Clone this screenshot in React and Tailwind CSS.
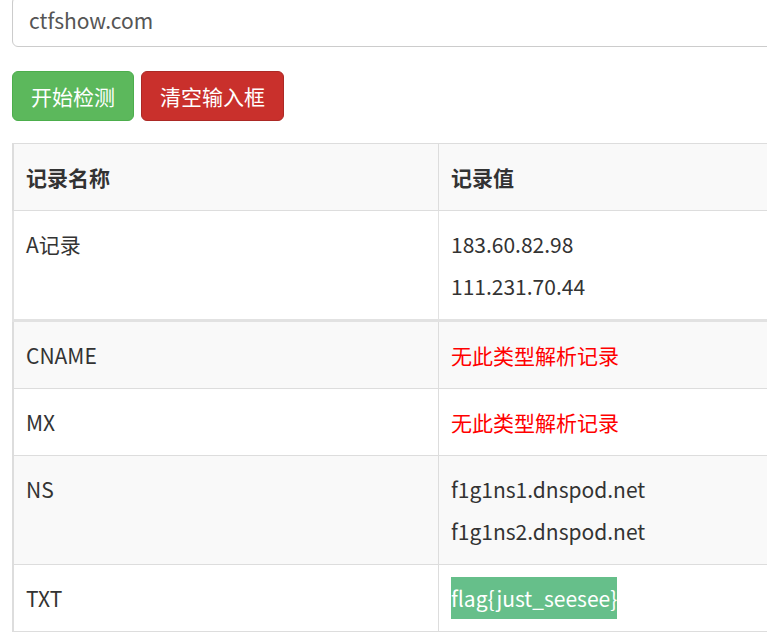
import React from "react";

const records = [
  { name: "A记录", values: ["183.60.82.98", "111.231.70.44"], thick: true },
  { name: "CNAME", missing: true },
  { name: "MX", missing: true },
  { name: "NS", values: ["f1g1ns1.dnspod.net", "f1g1ns2.dnspod.net"] },
  { name: "TXT", flag: "flag{just_seesee}" },
];

const font = { fontFamily: '"Noto Sans CJK SC", "Noto Sans", sans-serif' };

const App = () => {
  return (
    <div className="w-[767px] h-[635px] overflow-hidden bg-white text-[#333] text-[21px]" style={font}>
      <div className="w-[1000px] pl-3">
        <input
          type="text"
          defaultValue="ctfshow.com"
          className="block w-full h-[51px] -mt-[4px] pl-4 pr-4 pb-[3px] border border-[#ccc] rounded-[6px] text-[#555] text-[21px] shadow-[inset_0_1px_1px_rgba(0,0,0,0.075)] outline-none"
        />

        <div className="flex gap-[7px] mt-6">
          <button className="h-[50px] px-[18px] leading-[30px] rounded-[6px] bg-[#5cb85c] border border-[#4cae4c] text-white">
            开始检测
          </button>
          <button className="h-[50px] px-[18px] leading-[30px] rounded-[6px] bg-[#c9302c] border border-[#ac2925] text-white">
            清空输入框
          </button>
        </div>

        <table className="mt-[22px] w-full border-separate border-spacing-0 border-t border-[#ddd]">
          <thead>
            <tr className="bg-[#f9f9f9]">
              <th className="w-[427px] text-left font-bold px-3 py-[18px] leading-[30px] border-l-2 border-r border-b border-[#ddd]">
                记录名称
              </th>
              <th className="text-left font-bold px-3 py-[18px] leading-[30px] border-b border-[#ddd]">
                记录值
              </th>
            </tr>
          </thead>
          <tbody>
            {records.map((r, i) => {
              const bottom = r.thick ? "border-b-[3px] border-[#e2e2e2]" : "border-b border-[#ddd]";
              return (
                <tr key={r.name} className={i % 2 === 1 ? "bg-[#f9f9f9]" : "bg-white"}>
                  <td className={`align-top px-3 py-[18px] leading-[30px] border-l-2 border-r border-[#ddd] ${bottom}`}>
                    {r.name}
                  </td>
                  <td className={`align-top px-3 py-[18px] leading-[30px] ${bottom}`}>
                    {r.values && (
                      <div className="flex flex-col gap-3">
                        {r.values.map((v) => (
                          <span key={v}>{v}</span>
                        ))}
                      </div>
                    )}
                    {r.missing && <span className="text-[#f00]">无此类型解析记录</span>}
                    {r.flag && (
                      <span className="inline-block leading-[42px] -my-[6px] bg-[#66bf8a] text-white">{r.flag}</span>
                    )}
                  </td>
                </tr>
              );
            })}
          </tbody>
        </table>
      </div>
    </div>
  );
};

export default App;
